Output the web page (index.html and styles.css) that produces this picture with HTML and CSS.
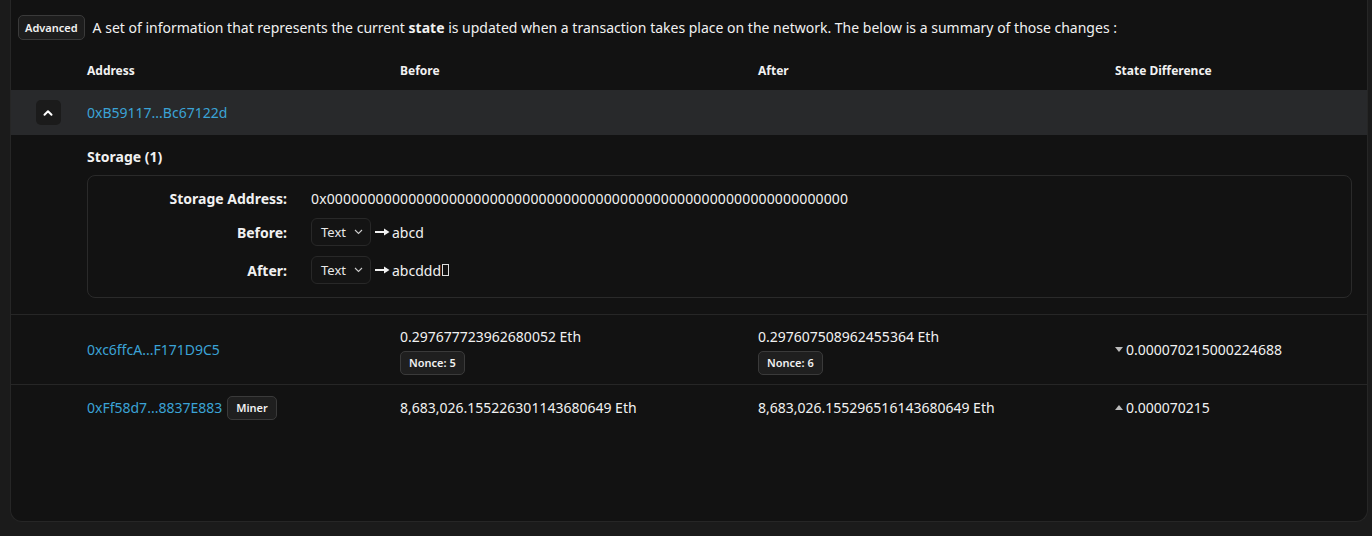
FILE: index.html
```html
<!DOCTYPE html>
<html>
<head>
<meta charset="utf-8">
<link rel="stylesheet" href="styles.css">
</head>
<body>
<div class="card">
  <div class="intro">
    <span class="badge">Advanced</span>
    <span class="desc">A set of information that represents the current <b>state</b> is updated when a transaction takes place on the network. The below is a summary of those changes :</span>
  </div>
  <div class="table">
    <div class="row head">
      <div></div>
      <div>Address</div>
      <div>Before</div>
      <div>After</div>
      <div>State Difference</div>
    </div>
    <div class="row expanded">
      <div class="tcell"><span class="toggle"><svg width="12" height="12" viewBox="0 0 12 12"><path d="M2.5 7.8 L6 4.2 L9.5 7.8" fill="none" stroke="#fff" stroke-width="2" stroke-linecap="round" stroke-linejoin="round"/></svg></span></div>
      <div><a class="addr">0xB59117...Bc67122d</a></div>
      <div></div><div></div><div></div>
    </div>
    <div class="detail">
      <div class="stitle">Storage (1)</div>
      <div class="sbox">
        <div class="slabel">Storage Address:</div>
        <div class="sval hex">0x0000000000000000000000000000000000000000000000000000000000000000</div>
        <div class="slabel">Before:</div>
        <div class="sval"><span class="select">Text <svg width="9" height="6" viewBox="0 0 9 6"><path d="M1 1 L4.5 4.5 L8 1" fill="none" stroke="#ccc" stroke-width="1.1"/></svg></span><svg class="arrow" width="15" height="8" viewBox="0 0 15 8"><path d="M0 4 H10" stroke="#f1f1f1" stroke-width="2"/><path d="M9 0.5 L14.5 4 L9 7.5 Z" fill="#f1f1f1"/></svg>abcd</div>
        <div class="slabel">After:</div>
        <div class="sval"><span class="select">Text <svg width="9" height="6" viewBox="0 0 9 6"><path d="M1 1 L4.5 4.5 L8 1" fill="none" stroke="#ccc" stroke-width="1.1"/></svg></span><svg class="arrow" width="15" height="8" viewBox="0 0 15 8"><path d="M0 4 H10" stroke="#f1f1f1" stroke-width="2"/><path d="M9 0.5 L14.5 4 L9 7.5 Z" fill="#f1f1f1"/></svg>abcddd<span class="tofu"></span></div>
      </div>
    </div>
    <div class="row item tall">
      <div></div>
      <div><a class="addr">0xc6ffcA...F171D9C5</a></div>
      <div class="stack"><span>0.297677723962680052 Eth</span><span class="pill">Nonce: 5</span></div>
      <div class="stack"><span>0.297607508962455364 Eth</span><span class="pill">Nonce: 6</span></div>
      <div class="diff"><span class="tri down"></span>0.000070215000224688</div>
    </div>
    <div class="row item short">
      <div></div>
      <div class="addrcell"><a class="addr">0xFf58d7...8837E883</a><span class="pill">Miner</span></div>
      <div>8,683,026.155226301143680649 Eth</div>
      <div>8,683,026.155296516143680649 Eth</div>
      <div class="diff"><span class="tri up"></span>0.000070215</div>
    </div>
  </div>
</div>
</body>
</html>
```
FILE: styles.css
```css
* { box-sizing: border-box; }
html, body { margin: 0; padding: 0; }
body {
  background: #1b1b1b;
  font-family: "Noto Sans", "DejaVu Sans", sans-serif;
  color: #f1f1f1;
  font-size: 14px;
  width: 1372px;
  height: 536px;
  overflow: hidden;
  padding: 0 4px 0 10px;
}
.card {
  background: #121212;
  border: 1px solid #262626;
  border-top: none;
  border-radius: 0 0 12px 12px;
  height: 522px;
  display: flex;
  flex-direction: column;
}
.intro {
  display: flex;
  align-items: center;
  gap: 8px;
  padding: 14px 0 0 7px;
  height: 40px;
}
.badge {
  display: inline-flex;
  align-items: center;
  height: 25px;
  padding: 0 6px;
  border: 1px solid #3a3a3a;
  border-radius: 5px;
  background: #1d1d1d;
  font-size: 11px;
  font-weight: 600;
}
.desc { white-space: nowrap; letter-spacing: 0; }
.desc b { font-weight: 700; }
.table { margin-top: 10px; }
.row {
  display: grid;
  grid-template-columns: 76px 313px 358px 357px 1fr;
  align-items: center;
}
.head { height: 40px; font-size: 12px; font-weight: 700; }
.expanded { height: 45px; background: #28292b; }
.tcell { display: flex; justify-content: center; }
.toggle {
  width: 25px; height: 25px;
  border-radius: 5px;
  background: #1b1b1b;
  display: flex; align-items: center; justify-content: center;
  margin-left: -2px;
}
.addr { color: #3ba3d6; text-decoration: none; }
.detail {
  padding: 12px 15px 16px 76px;
  border-bottom: 1px solid #262626;
}
.stitle { font-weight: 700; height: 20px; line-height: 20px; margin-bottom: 8px; }
.sbox {
  border: 1px solid #2a2a2a;
  border-radius: 8px;
  display: grid;
  grid-template-columns: 199px 1fr;
  column-gap: 24px;
  row-gap: 10px;
  padding: 13px 0 13px 0;
  align-items: center;
}
.slabel { text-align: right; font-weight: 700; }
.sval { display: flex; align-items: center; }
.hex { letter-spacing: 0.14px; }
.select {
  display: inline-flex;
  align-items: center;
  gap: 8px;
  height: 28px;
  width: 60px;
  padding-left: 9px;
  border: 1px solid #282828;
  border-radius: 6px;
  background: #141414;
  font-size: 13px;
  color: #e8e8e8;
}
.arrow { margin: 0 2px 0 4px; }
.tofu {
  display: inline-block;
  width: 7px; height: 12px;
  border: 1px solid #ddd;
  margin-left: 1px;
}
.item { border-bottom: 1px solid #262626; }
.tall { height: 70px; }
.short { height: 45px; border-bottom: none; }
.stack { display: flex; flex-direction: column; align-items: flex-start; gap: 5px; padding-top: 2px; }
.pill {
  display: inline-flex;
  align-items: center;
  height: 24px;
  padding: 0 8px;
  border: 1px solid #3a3a3a;
  border-radius: 5px;
  background: #1f1f1f;
  font-size: 11px;
  font-weight: 600;
}
.addrcell { display: flex; align-items: center; gap: 5px; }
.diff { display: flex; align-items: center; gap: 3px; }
.tri { width: 0; height: 0; border-left: 4.5px solid transparent; border-right: 4.5px solid transparent; }
.tri.down { border-top: 5px solid #bbb; }
.tri.up { border-bottom: 5px solid #bbb; }
```
